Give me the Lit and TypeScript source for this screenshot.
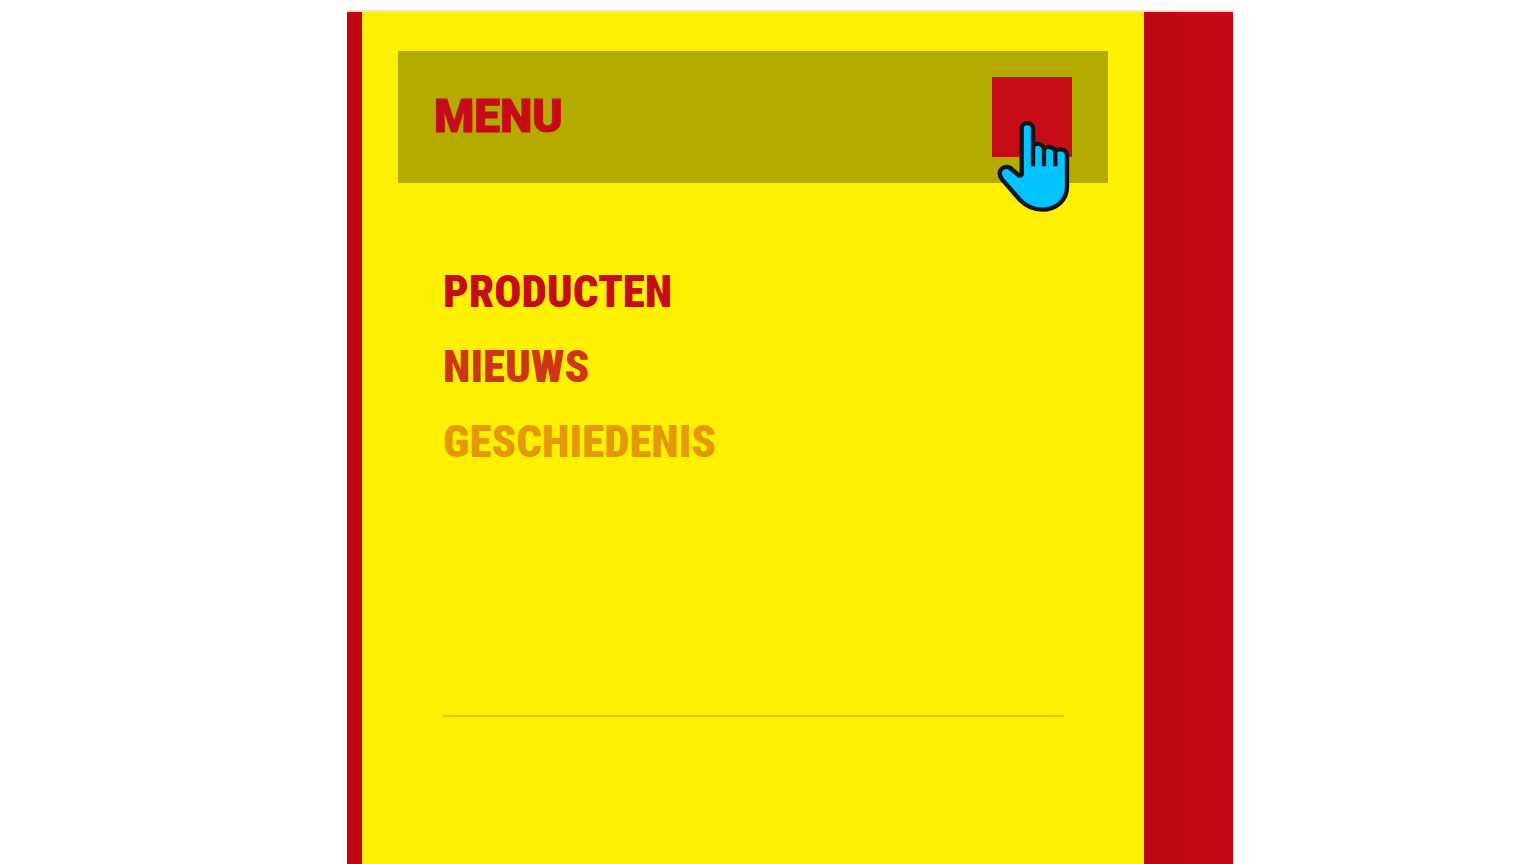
import { LitElement, html, css } from "lit";
import { customElement, state } from "lit/decorators.js";

interface MenuLink {
  label: string;
  tone: string;
}

@customElement("app-root")
export class AppRoot extends LitElement {
  static styles = css`
    :host {
      display: block;
      min-height: 100vh;
      background: #fff;
      color: #c60a16;
      font-family: "Roboto", "Liberation Sans", sans-serif;
    }
    .page {
      display: grid;
      grid-template-columns: 347fr 886fr 303fr;
      min-height: 100vh;
    }
    .frame {
      grid-column: 2;
      display: flex;
      flex-direction: column;
      background: #fefefe;
    }
    .stage {
      flex: 1;
      display: flex;
      margin-top: 10px;
      border-top: 2px solid #efe0d4;
      background: linear-gradient(to right, #c00412 90%, #bb0714 90%, #c40916 96%);
    }
    .panel {
      flex: 1;
      box-sizing: border-box;
      margin: 0 89px 0 15px;
      padding: 39px 36px;
      background: #fdf000;
    }
    .bar {
      display: flex;
      align-items: center;
      justify-content: space-between;
      height: 132px;
      box-sizing: border-box;
      padding: 0 36px;
      background: #b5aa00;
    }
    .title {
      margin: 0;
      padding-bottom: 2px;
      font-size: 46px;
      line-height: 56px;
      font-weight: 900;
      -webkit-text-stroke: 1px currentColor;
    }
    .toggle {
      position: relative;
      width: 80px;
      height: 80px;
      padding: 0;
      border: 0;
      background: #c60a16;
    }
    .pointer {
      position: absolute;
      left: 5px;
      top: 43px;
      width: 74px;
      height: 94px;
      overflow: visible;
    }
    .links {
      list-style: none;
      margin: 71px 44px 0 45px;
      padding: 0 0 236px;
      border-bottom: 2px solid #dfc800;
      font-family: "Roboto Condensed", "Liberation Sans Narrow", "Roboto", sans-serif;
      font-size: 45px;
      font-weight: 900;
      line-height: 75px;
    }
    .link {
      text-decoration: none;
    }
    .strong { color: #c40d16; }
    .medium { color: #ce3512; }
    .faint { color: #e59808; }
  `;

  @state() private links: MenuLink[] = [
    { label: "PRODUCTEN", tone: "strong" },
    { label: "NIEUWS", tone: "medium" },
    { label: "GESCHIEDENIS", tone: "faint" },
  ];

  render() {
    return html`
      <div class="page">
        <main class="frame">
          <div class="stage">
            <section class="panel">
              <header class="bar">
                <h1 class="title">MENU</h1>
                <button class="toggle" aria-label="Menu">
                  <svg class="pointer" viewBox="111 210 222 282" aria-hidden="true">
                    <path
                      d="M185 374 V236 C185 214 219 214 219 236 V288 C228 276 250 281 252 297 C261 286 283 290 286 304 C298 292 321 299 321 317 V410 C321 450 290 479 246 479 C218 479 198 468 181 451 L126 388 C108 363 130 343 151 354 L174 374 Q180 380 185 374 Z"
                      fill="#00c3ff" stroke="#101418" stroke-width="13" stroke-linejoin="round" />
                    <path d="M219 284 V349 M252 294 V349 M286 302 V349" fill="none" stroke="#101418" stroke-width="13" />
                  </svg>
                </button>
              </header>
              <nav aria-label="Menu">
                <ul class="links">
                  ${this.links.map(
                    (l) => html`<li><a class="link ${l.tone}" href="#">${l.label}</a></li>`
                  )}
                </ul>
              </nav>
            </section>
          </div>
        </main>
      </div>
    `;
  }
}
